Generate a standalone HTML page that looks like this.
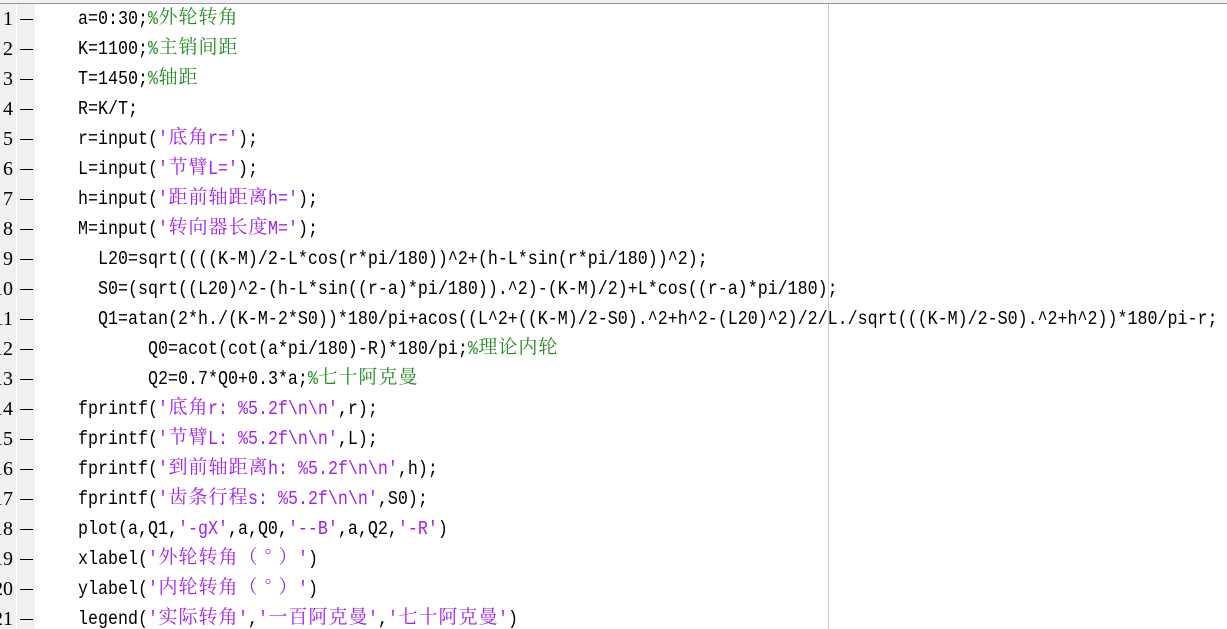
<!DOCTYPE html>
<html><head><meta charset="utf-8"><style>
html,body{margin:0;padding:0;width:1227px;height:629px;overflow:hidden;background:#fff;position:relative}
.top{position:absolute;left:0;top:0;width:1227px;height:3px;background:#f0f0f0;border-bottom:1px solid #999}
.g1{position:absolute;left:0;top:4px;width:16px;height:625px;background:#f0f0f0}
.g2{position:absolute;left:17px;top:4px;width:18px;height:625px;background:#f0f0f0}
.vl{position:absolute;left:828px;top:4px;width:1px;height:625px;background:#ccc}
.ln{position:absolute;height:30px;line-height:30px;margin-top:3px;font-family:"Liberation Mono",monospace;font-size:16.67px;color:#000;white-space:pre;transform:scaleY(1.15);transform-origin:0 60%}
.num{position:absolute;right:1214px;height:30px;line-height:30px;margin-top:1px;font-family:"Liberation Serif",serif;font-size:20px;color:#000;white-space:pre}
.dash{position:absolute;left:20px;width:13px;height:1px;background:#000;margin-top:1px}
.z{font-family:"Noto Serif CJK SC","Noto Sans CJK SC",serif;font-size:19px;display:inline-block;width:20px;text-align:center;transform:scaleY(0.87);line-height:20px}
.s{color:#a020f0}.c{color:#228b22}
</style></head><body>
<div class="top"></div><div class="g1"></div><div class="g2"></div><div class="vl"></div>

<div class="num" style="top:3px">1</div><div class="dash" style="top:18px"></div>
<div class="num" style="top:33px">2</div><div class="dash" style="top:48px"></div>
<div class="num" style="top:63px">3</div><div class="dash" style="top:78px"></div>
<div class="num" style="top:93px">4</div><div class="dash" style="top:108px"></div>
<div class="num" style="top:123px">5</div><div class="dash" style="top:138px"></div>
<div class="num" style="top:153px">6</div><div class="dash" style="top:168px"></div>
<div class="num" style="top:183px">7</div><div class="dash" style="top:198px"></div>
<div class="num" style="top:213px">8</div><div class="dash" style="top:228px"></div>
<div class="num" style="top:243px">9</div><div class="dash" style="top:258px"></div>
<div class="num" style="top:273px">10</div><div class="dash" style="top:288px"></div>
<div class="num" style="top:303px">11</div><div class="dash" style="top:318px"></div>
<div class="num" style="top:333px">12</div><div class="dash" style="top:348px"></div>
<div class="num" style="top:363px">13</div><div class="dash" style="top:378px"></div>
<div class="num" style="top:393px">14</div><div class="dash" style="top:408px"></div>
<div class="num" style="top:423px">15</div><div class="dash" style="top:438px"></div>
<div class="num" style="top:453px">16</div><div class="dash" style="top:468px"></div>
<div class="num" style="top:483px">17</div><div class="dash" style="top:498px"></div>
<div class="num" style="top:513px">18</div><div class="dash" style="top:528px"></div>
<div class="num" style="top:543px">19</div><div class="dash" style="top:558px"></div>
<div class="num" style="top:573px">20</div><div class="dash" style="top:588px"></div>
<div class="num" style="top:603px">21</div><div class="dash" style="top:618px"></div>

<div class="ln" style="top:3px;left:78px">a=0:30;<span class="c">%<span class="z">外</span><span class="z">轮</span><span class="z">转</span><span class="z">角</span></span></div>
<div class="ln" style="top:33px;left:78px">K=1100;<span class="c">%<span class="z">主</span><span class="z">销</span><span class="z">间</span><span class="z">距</span></span></div>
<div class="ln" style="top:63px;left:78px">T=1450;<span class="c">%<span class="z">轴</span><span class="z">距</span></span></div>
<div class="ln" style="top:93px;left:78px">R=K/T;</div>
<div class="ln" style="top:123px;left:78px">r=input(<span class="s">'<span class="z">底</span><span class="z">角</span>r='</span>);</div>
<div class="ln" style="top:153px;left:78px">L=input(<span class="s">'<span class="z">节</span><span class="z">臂</span>L='</span>);</div>
<div class="ln" style="top:183px;left:78px">h=input(<span class="s">'<span class="z">距</span><span class="z">前</span><span class="z">轴</span><span class="z">距</span><span class="z">离</span>h='</span>);</div>
<div class="ln" style="top:213px;left:78px">M=input(<span class="s">'<span class="z">转</span><span class="z">向</span><span class="z">器</span><span class="z">长</span><span class="z">度</span>M='</span>);</div>
<div class="ln" style="top:243px;left:98px">L20=sqrt((((K-M)/2-L*cos(r*pi/180))^2+(h-L*sin(r*pi/180))^2);</div>
<div class="ln" style="top:273px;left:98px">S0=(sqrt((L20)^2-(h-L*sin((r-a)*pi/180)).^2)-(K-M)/2)+L*cos((r-a)*pi/180);</div>
<div class="ln" style="top:303px;left:98px">Q1=atan(2*h./(K-M-2*S0))*180/pi+acos((L^2+((K-M)/2-S0).^2+h^2-(L20)^2)/2/L./sqrt(((K-M)/2-S0).^2+h^2))*180/pi-r;</div>
<div class="ln" style="top:333px;left:148px">Q0=acot(cot(a*pi/180)-R)*180/pi;<span class="c">%<span class="z">理</span><span class="z">论</span><span class="z">内</span><span class="z">轮</span></span></div>
<div class="ln" style="top:363px;left:148px">Q2=0.7*Q0+0.3*a;<span class="c">%<span class="z">七</span><span class="z">十</span><span class="z">阿</span><span class="z">克</span><span class="z">曼</span></span></div>
<div class="ln" style="top:393px;left:78px">fprintf(<span class="s">'<span class="z">底</span><span class="z">角</span>r: %5.2f\n\n'</span>,r);</div>
<div class="ln" style="top:423px;left:78px">fprintf(<span class="s">'<span class="z">节</span><span class="z">臂</span>L: %5.2f\n\n'</span>,L);</div>
<div class="ln" style="top:453px;left:78px">fprintf(<span class="s">'<span class="z">到</span><span class="z">前</span><span class="z">轴</span><span class="z">距</span><span class="z">离</span>h: %5.2f\n\n'</span>,h);</div>
<div class="ln" style="top:483px;left:78px">fprintf(<span class="s">'<span class="z">齿</span><span class="z">条</span><span class="z">行</span><span class="z">程</span>s: %5.2f\n\n'</span>,S0);</div>
<div class="ln" style="top:513px;left:78px">plot(a,Q1,<span class="s">'-gX'</span>,a,Q0,<span class="s">'--B'</span>,a,Q2,<span class="s">'-R'</span>)</div>
<div class="ln" style="top:543px;left:78px">xlabel(<span class="s">'<span class="z">外</span><span class="z">轮</span><span class="z">转</span><span class="z">角</span><span class="z">（</span><span class="z">°</span><span class="z">）</span>'</span>)</div>
<div class="ln" style="top:573px;left:78px">ylabel(<span class="s">'<span class="z">内</span><span class="z">轮</span><span class="z">转</span><span class="z">角</span><span class="z">（</span><span class="z">°</span><span class="z">）</span>'</span>)</div>
<div class="ln" style="top:603px;left:78px">legend(<span class="s">'<span class="z">实</span><span class="z">际</span><span class="z">转</span><span class="z">角</span>'</span>,<span class="s">'<span class="z">一</span><span class="z">百</span><span class="z">阿</span><span class="z">克</span><span class="z">曼</span>'</span>,<span class="s">'<span class="z">七</span><span class="z">十</span><span class="z">阿</span><span class="z">克</span><span class="z">曼</span>'</span>)</div>
</body></html>
